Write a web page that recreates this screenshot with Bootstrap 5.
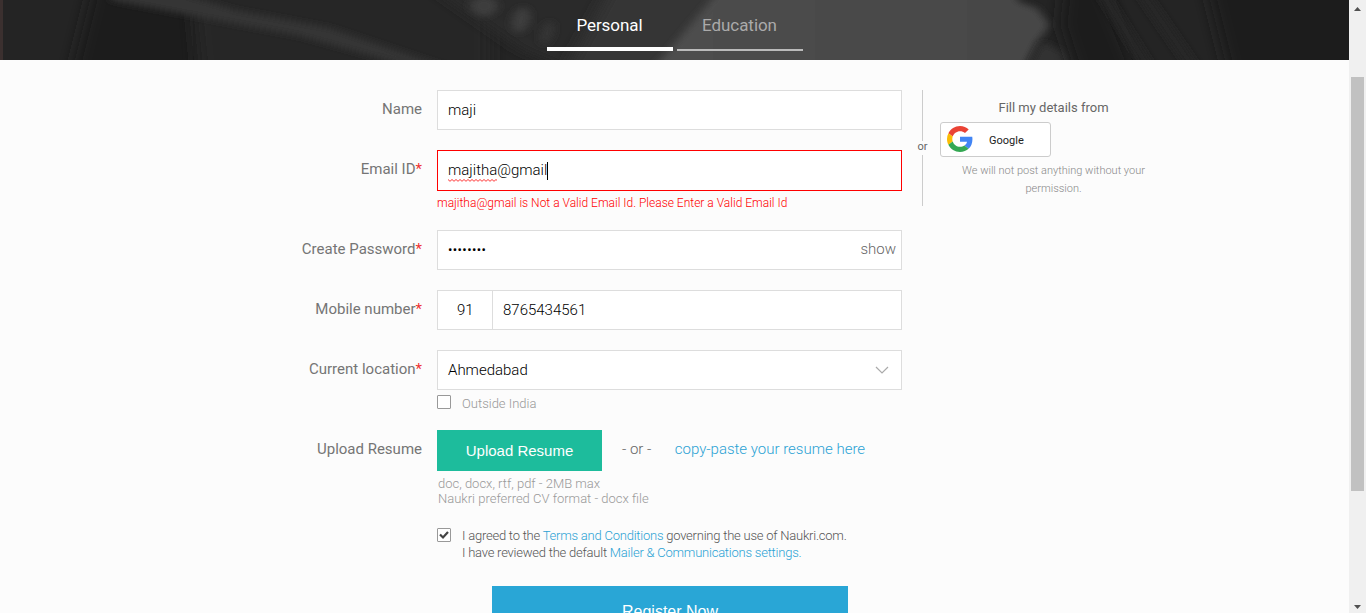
<!DOCTYPE html>
<html lang="en">
<head>
<meta charset="utf-8">
<meta name="viewport" content="width=device-width, initial-scale=1">
<title>Naukri.com - Register</title>
<link href="https://cdn.jsdelivr.net/npm/bootstrap@5.3.0/dist/css/bootstrap.min.css" rel="stylesheet">
<style>
body{font-family:Roboto,"Liberation Sans",sans-serif;font-weight:300;font-size:15px;line-height:20px;background:#fcfcfc;color:#666;height:613px}
a{color:#2ba2d4;text-decoration:none}
.hero{height:60px;background:#252525}
.hero-art{left:0;top:0;width:100%;height:60px}
.steps{gap:4px;padding-left:547px}
.step{width:126px;height:51px;padding:15px 1px 0 0;font-size:17px;line-height:21px;color:#aaa;font-weight:400;letter-spacing:-.05px;border-bottom:2px solid #bbb}
.step.active{color:#fff;border-bottom:4px solid #fff}
.page-form{padding-top:30px}
.form-side{width:902px}
.field-row{min-height:60px}
.field-row.tall{min-height:80px}
.field-label{width:422px;padding-top:9px;font-weight:400;color:#757575;margin-right:15px}
.req{color:#e33}
.field{width:465px}
.box{height:40px;border:1px solid #ddd;border-radius:0;padding:0 10px;font-size:15px;font-weight:300;color:#000;background:#fff}
.box.bad{height:41px;border-color:#f00}
.code{width:55px;border-right:0;padding-left:19px}
.squiggle{background:url("data:image/svg+xml,%3Csvg xmlns='http://www.w3.org/2000/svg' width='4' height='3'%3E%3Cpath d='M0 .5L2 2.3L4 .5' fill='none' stroke='%23f22' stroke-width='.9'/%3E%3C/svg%3E") 0 100%/4px 3px repeat-x}
.caret{width:1px;height:18px;background:#000}
.error{font-size:12px;line-height:16px;color:#f00;margin-top:4px}
.dots{font-weight:400;font-size:13px;letter-spacing:.4px}
.show-pw{color:#666;margin-right:1px;margin-top:-2px}
.tick{width:14px;height:14px;border:1px solid #999;border-radius:1px;background:#fff}
.hint{font-size:13px;line-height:15px;color:#999}
.outside{margin-top:5px}
.outside .tick{margin-bottom:2px}
.outside span{margin-left:11px}
.upload{width:165px;height:41px;background:#1dbc9c;color:#fff;border:0;border-radius:0;font:400 15px/41px "Liberation Sans",Arial,sans-serif;padding:0}
.or-text{margin:9px 0 0 20px}
.paste{margin:9px 0 0 23.4px}
.formats{margin:5px 0 0 1px}
.consent{margin:21px 0 0 437px}
.consent .tick{margin:1px 11px 0 0}
.terms{font-size:13px;letter-spacing:-.23px;line-height:17px;color:#555}
.register{width:356px;height:50px;margin:25px 0 0 492px;background:#29a6d6;color:#fff;border:0;border-radius:0;font:400 16px/52px "Liberation Sans",Arial,sans-serif;padding:0}
.or-col{width:11px;height:116px;margin-left:15px;font-size:11px;line-height:14px;font-weight:400}
.or-col span{margin:-1px 0 1px}
.rule{width:1px;background:#ccc}
.social{width:227px;margin-left:12px;padding-top:9px}
.fill{font-size:13px;line-height:17px;font-weight:400;margin-bottom:6px}
.google{width:111px;height:35px;border:1px solid #ccc;border-radius:3px;background:#fff;padding:0 0 0 6px;color:#222;font-size:11px;font-weight:400}
.google svg{margin-bottom:2px}
.google-text{margin-left:16px;margin-top:4px}
.note{font-size:11px;line-height:18px;color:#888;padding:0 15px;margin-top:5px}
.scroll{width:17px;background:#f0f0f0;padding:7px 0 4px}
.thumb{width:13px;height:414px;background:#c1c1c1;margin-top:66px}
</style>
<script src="https://cdn.jsdelivr.net/npm/bootstrap@5.3.0/dist/js/bootstrap.bundle.min.js"></script>
</head>
<body class="overflow-hidden d-flex">
<div class="flex-grow-1 overflow-hidden">
  <header class="hero position-relative overflow-hidden">
    <svg class="hero-art position-absolute" viewBox="0 0 1349 60" preserveAspectRatio="none" aria-hidden="true">
      <defs>
        <linearGradient id="glow"><stop offset="0" stop-color="#4e4e4e"/><stop offset="1" stop-color="#464646"/></linearGradient>
        <filter id="soft8" filterUnits="userSpaceOnUse" x="-60" y="-60" width="1470" height="180"><feGaussianBlur stdDeviation="8 5"/></filter>
        <filter id="soft4" filterUnits="userSpaceOnUse" x="-60" y="-60" width="1470" height="180"><feGaussianBlur stdDeviation="4 3"/></filter>
      </defs>
      <rect width="1349" height="60" fill="#242424"/>
      <path d="M95 -20H200V80H70Z" fill="#1b1b1b" filter="url(#soft8)"/>
      <path d="M190 -20H490V80H200Z" fill="#252525" filter="url(#soft8)"/>
      <path d="M120 -20L175 -8L235 10L330 28L450 68H415L300 36L215 20L110 0Z" fill="#353535" filter="url(#soft4)"/>
      <path d="M420 -20H720V80H590L520 50Z" fill="#2a2a2a" filter="url(#soft8)"/>
      <g fill="#3e3e3e" filter="url(#soft4)">
        <ellipse cx="484" cy="6" rx="14" ry="10"/>
        <ellipse cx="521" cy="20" rx="9" ry="13" transform="rotate(20 521 20)"/>
        <ellipse cx="547" cy="33" rx="6" ry="12" fill="#363636" transform="rotate(20 547 33)"/>
      </g>
      <path d="M615 -20H740V80H560Z" fill="#343434" filter="url(#soft8)"/>
      <path d="M728 -20H1008L1019 2L1037 8L1050 25L1037 42L1018 80H640L665 55Z" fill="url(#glow)" filter="url(#soft4)"/>
      <path d="M1042 42L1065 52L1072 75H1025Z" fill="#333" filter="url(#soft4)"/>
      <path d="M1065 -20H1100L1140 80H1078L1060 25Z" fill="#1b1b1b" filter="url(#soft8)"/>
      <path d="M1100 -10L1150 70M1140 -10L1195 70" stroke="#282828" stroke-width="9" filter="url(#soft4)"/>
      <path d="M1205 -20H1370V80H1230Z" fill="#1f1f1f" filter="url(#soft8)"/>
      <rect width="3" height="60" fill="#3b302f"/>
    </svg>
    <nav class="steps nav position-relative">
      <a href="#" class="step active text-center">Personal</a>
      <a href="#" class="step text-center">Education</a>
    </nav>
  </header>

  <main class="page-form d-flex">
    <form class="form-side flex-shrink-0">
      <div class="field-row d-flex">
        <div class="field-label text-end">Name</div>
        <div class="field"><div class="box form-control d-flex align-items-center">maji</div></div>
      </div>
      <div class="field-row tall d-flex">
        <div class="field-label text-end">Email ID<span class="req">*</span></div>
        <div class="field">
          <div class="box bad form-control d-flex align-items-center"><span class="squiggle">majitha</span><span>@gmail</span><i class="caret"></i></div>
          <div class="error">majitha@gmail is Not a Valid Email Id. Please Enter a Valid Email Id</div>
        </div>
      </div>
      <div class="field-row d-flex">
        <div class="field-label text-end">Create Password<span class="req">*</span></div>
        <div class="field"><div class="box form-control d-flex align-items-center justify-content-between pe-1"><span class="dots">••••••••</span><span class="show-pw">show</span></div></div>
      </div>
      <div class="field-row d-flex">
        <div class="field-label text-end">Mobile number<span class="req">*</span></div>
        <div class="field d-flex">
          <div class="box code form-control flex-shrink-0 d-flex align-items-center">91</div>
          <div class="box form-control d-flex align-items-center">8765434561</div>
        </div>
      </div>
      <div class="field-row tall d-flex">
        <div class="field-label text-end">Current location<span class="req">*</span></div>
        <div class="field">
          <div class="box form-control d-flex align-items-center justify-content-between">Ahmedabad
            <svg width="18" height="12" viewBox="0 0 18 12" fill="none" stroke="#aaa" stroke-width="1.2"><path d="M3 3L9 9L15 3"/></svg>
          </div>
          <div class="outside hint d-flex align-items-center"><i class="tick"></i><span>Outside India</span></div>
        </div>
      </div>
      <div class="d-flex">
        <div class="field-label text-end">Upload Resume</div>
        <div class="field">
          <div class="d-flex">
            <button type="button" class="upload btn">Upload Resume</button>
            <span class="or-text">- or -</span>
            <a href="#" class="paste">copy-paste your resume here</a>
          </div>
          <div class="hint formats">doc, docx, rtf, pdf - 2MB max<br>Naukri preferred CV format - docx file</div>
        </div>
      </div>
      <div class="consent d-flex">
        <i class="tick d-flex"><svg width="12" height="12" viewBox="0 0 12 12" fill="none" stroke="#444" stroke-width="2.2"><path d="M2 5.5L5 8.5L10 3"/></svg></i>
        <div class="terms">I agreed to the <a href="#">Terms and Conditions</a> governing the use of Naukri.com.<br>I have reviewed the default <a href="#">Mailer &amp; Communications settings.</a></div>
      </div>
      <button type="button" class="register btn d-block">Register Now</button>
    </form>
    <aside class="d-flex">
      <div class="or-col d-flex flex-column align-items-center">
        <i class="rule flex-grow-1"></i><span>or</span><i class="rule flex-grow-1"></i>
      </div>
      <div class="social text-center">
        <div class="fill">Fill my details from</div>
        <button type="button" class="google btn d-flex align-items-center">
          <svg width="26" height="26" viewBox="0 0 48 48"><path fill="#EA4335" d="M24 9.5c3.54 0 6.71 1.22 9.21 3.6l6.85-6.85C35.9 2.38 30.47 0 24 0 14.62 0 6.51 5.38 2.56 13.22l7.98 6.19C12.43 13.72 17.74 9.5 24 9.5z"/><path fill="#4285F4" d="M46.98 24.55c0-1.57-.15-3.09-.38-4.55H24v9.02h12.94c-.58 2.96-2.26 5.48-4.78 7.18l7.73 6c4.51-4.18 7.09-10.36 7.09-17.65z"/><path fill="#FBBC05" d="M10.53 28.59A14.5 14.5 0 0 1 9.77 24c0-1.6.27-3.14.76-4.59l-7.98-6.19A23.99 23.99 0 0 0 0 24c0 3.88.92 7.54 2.56 10.78l7.97-6.19z"/><path fill="#34A853" d="M24 48c6.48 0 11.93-2.13 15.89-5.81l-7.73-6c-2.15 1.45-4.92 2.3-8.16 2.3-6.26 0-11.57-4.22-13.47-9.91l-7.98 6.19C6.51 42.62 14.62 48 24 48z"/></svg>
          <span class="google-text">Google</span>
        </button>
        <div class="note">We will not post anything without your permission.</div>
      </div>
    </aside>
  </main>
</div>
<div class="scroll d-flex flex-column align-items-center flex-shrink-0">
  <svg width="7" height="4" viewBox="0 0 7 4"><path d="M0 4L3.5 0L7 4Z" fill="#505050"/></svg>
  <div class="thumb"></div>
  <svg class="mt-auto" width="7" height="4" viewBox="0 0 7 4"><path d="M0 0L3.5 4L7 0Z" fill="#505050"/></svg>
</div>
</body>
</html>
